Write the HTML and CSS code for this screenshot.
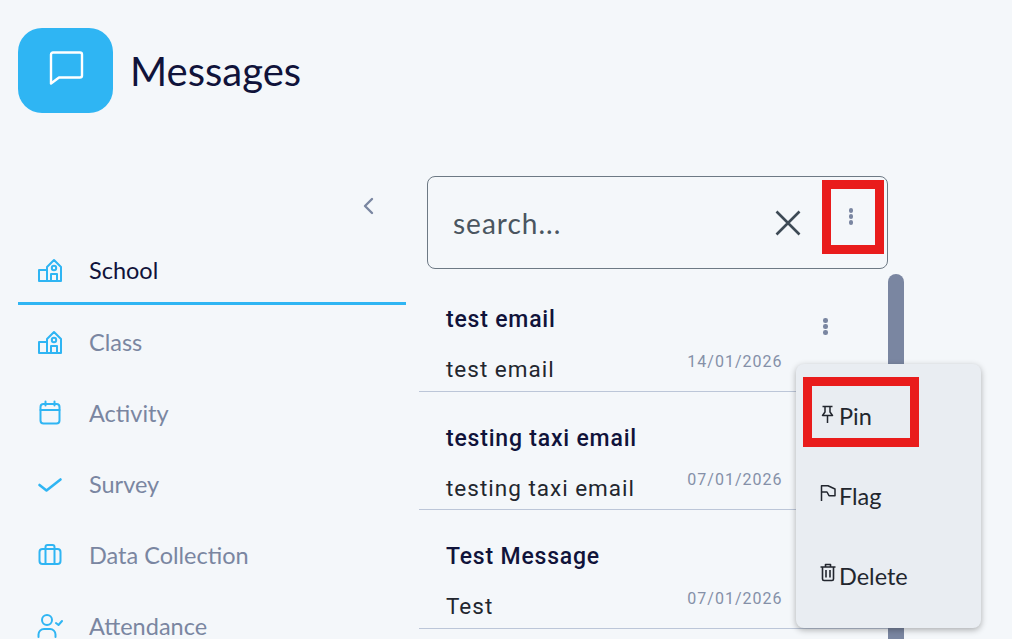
FILE: index.html

```html
<!DOCTYPE html>
<html lang="en">
<head>
    <meta charset="UTF-8">
    <meta name="viewport" content="width=device-width, initial-scale=1.0">
    <title>Messages</title>
    <link rel="stylesheet" href="styles.css">
</head>
<body>
    <div class="page">
        <header class="header">
            <div class="logo">
                <svg width="36" height="36" viewBox="0 0 36 36" fill="none" stroke="#fff" stroke-width="2.400" stroke-linejoin="round"><path d="M3 5.500a2 2 0 0 1 2-2h27a2 2 0 0 1 2 2v21a2 2 0 0 1-2 2H11l-8 6z"/></svg>
            </div>
            <h1>Messages</h1>
        </header>

        <div class="content">
            <nav class="sidebar">
                <div class="collapse">
                    <svg width="14" height="20" viewBox="0 0 14 20" fill="none" stroke="#7a86a1" stroke-width="2.400" stroke-linecap="round" stroke-linejoin="round"><path d="M11 3 4 10l7 7"/></svg>
                </div>
                <a class="tab active">
                    <svg class="tab-icon" viewBox="0 0 26 26" fill="none" stroke="#2fb5f3" stroke-width="2" stroke-linejoin="round"><path d="M2 13h8v11H2zM10 24V10l7-7 7 7v14zM14 24v-7h6v7"/><circle cx="17" cy="11" r="2.200"/></svg>
                    <span>School</span>
                </a>
                <a class="tab">
                    <svg class="tab-icon" viewBox="0 0 26 26" fill="none" stroke="#2fb5f3" stroke-width="2" stroke-linejoin="round"><path d="M2 13h8v11H2zM10 24V10l7-7 7 7v14zM14 24v-7h6v7"/><circle cx="17" cy="11" r="2.200"/></svg>
                    <span>Class</span>
                </a>
                <a class="tab">
                    <svg class="tab-icon" viewBox="0 0 26 26" fill="none" stroke="#2fb5f3" stroke-width="2" stroke-linecap="round" stroke-linejoin="round"><rect x="3.500" y="4" width="19" height="19.500" rx="3"/><path d="M3.500 10h19M8.500 1.500v4M17.500 1.500v4"/></svg>
                    <span>Activity</span>
                </a>
                <a class="tab">
                    <svg class="tab-icon" viewBox="0 0 26 26" fill="none" stroke="#2fb5f3" stroke-width="2.600" stroke-linecap="round" stroke-linejoin="round"><path d="m2.500 14 7 5.500L23.500 8.500"/></svg>
                    <span>Survey</span>
                </a>
                <a class="tab">
                    <svg class="tab-icon" viewBox="0 0 26 26" fill="none" stroke="#2fb5f3" stroke-width="2" stroke-linejoin="round"><rect x="2.500" y="7" width="21" height="15" rx="3"/><path d="M8.500 7v15M17.500 7v15M8.500 7V5a2 2 0 0 1 2-2h5a2 2 0 0 1 2 2v2"/></svg>
                    <span>Data Collection</span>
                </a>
                <a class="tab">
                    <svg class="tab-icon" viewBox="0 0 26 26" fill="none" stroke="#2fb5f3" stroke-width="2" stroke-linecap="round" stroke-linejoin="round"><circle cx="10" cy="7" r="5"/><path d="M1.500 24v-2.500A5.500 5.500 0 0 1 7 16h6a5.500 5.500 0 0 1 5.500 5.500V24M19 10l2.500 2 3.500-4"/></svg>
                    <span>Attendance</span>
                </a>
            </nav>

            <main class="messages">
                <div class="search">
                    <span class="search-text">search...</span>
                    <svg class="search-clear" width="26" height="26" viewBox="0 0 26 26" fill="none" stroke="#3d4a55" stroke-width="2.600"><path d="m1.500 1.500 23 23M24.500 1.500l-23 23"/></svg>
                    <div class="search-more">
                        <span class="dots"><i></i><i></i><i></i></span>
                    </div>
                    <div class="mark mark-search"></div>
                </div>

                <div class="list-wrap">
                    <div class="list">
                        <div class="row">
                            <div class="row-text">
                                <div class="row-title">test email</div>
                                <div class="row-body">test email</div>
                            </div>
                            <div class="row-date">14/01/2026</div>
                            <span class="dots row-dots"><i></i><i></i><i></i></span>
                        </div>
                        <div class="row">
                            <div class="row-text">
                                <div class="row-title">testing taxi email</div>
                                <div class="row-body">testing taxi email</div>
                            </div>
                            <div class="row-date">07/01/2026</div>
                            <span class="dots row-dots"><i></i><i></i><i></i></span>
                        </div>
                        <div class="row">
                            <div class="row-text">
                                <div class="row-title">Test Message</div>
                                <div class="row-body">Test</div>
                            </div>
                            <div class="row-date">07/01/2026</div>
                            <span class="dots row-dots"><i></i><i></i><i></i></span>
                        </div>
                    </div>
                    <div class="scroll-thumb"></div>

                    <div class="menu">
                        <div class="menu-item">
                            <svg width="16" height="22" viewBox="0 0 16 22" fill="none" stroke="#22262e" stroke-width="1.500" stroke-linejoin="round"><path d="M2.500 3.500h10M5 3.500V9l-2.500 3.500h10L10 9V3.500M7.500 12.500V20"/></svg>
                            <span>Pin</span>
                        </div>
                        <div class="menu-item">
                            <svg width="16" height="22" viewBox="0 0 16 22" fill="none" stroke="#22262e" stroke-width="1.500" stroke-linejoin="round"><path d="M1.500 18V2.700H8L15 6v6.700H9L7 9H1.500"/></svg>
                            <span>Flag</span>
                        </div>
                        <div class="menu-item">
                            <svg width="16" height="22" viewBox="0 0 16 22" fill="none" stroke="#22262e" stroke-width="1.600" stroke-linejoin="round"><path d="M.5 4h15M5.500 4V1.500h5V4M2.500 4v12a1.500 1.500 0 0 0 1.500 1.500h8a1.500 1.500 0 0 0 1.500-1.500V4M6 7v7.500M10 7v7.500"/></svg>
                            <span>Delete</span>
                        </div>
                        <div class="mark mark-pin"></div>
                    </div>
                </div>
            </main>
        </div>
    </div>
</body>
</html>
```

FILE: styles.css

```css
html, body { margin: 0; padding: 0; height: 100%; overflow: hidden; }
body { background-color: #f4f7fa; font-family: Lato, "Open Sans", sans-serif; color: #10133a; }
.page { height: 639px; overflow: hidden; }

.header { display: flex; align-items: center; gap: 17px; padding: 28px 18px 0; }
.logo { width: 95px; height: 85px; border-radius: 24px; background-color: #2fb5f3; display: flex; align-items: center; justify-content: center; }
.logo svg { margin-bottom: 7px; }
h1 { margin: 0; font-size: 40px; font-weight: 400; color: #10133a; }

.content { display: flex; margin-top: 63px; }
.sidebar { width: 388px; margin-left: 18px; flex-shrink: 0; }
.collapse { display: flex; justify-content: flex-end; height: 66px; padding-right: 31px; padding-top: 20px; box-sizing: border-box; }
.tab { display: flex; align-items: center; gap: 26px; height: 71px; padding: 2px 0 0 19px; box-sizing: border-box; font-size: 23.500px; color: #7a86a1; }
.tab-icon { width: 26px; height: 26px; flex-shrink: 0; }
.tab.active { height: 63px; padding-bottom: 6px; color: #10133a; border-bottom: 3px solid #2fb5f3; }

.messages { width: 485px; margin-left: 13px; flex-shrink: 0; }
.search { position: relative; display: flex; align-items: center; width: 461px; height: 93px; margin-left: 8px; padding: 0 0 0 25px; box-sizing: border-box; border: 1px solid #6d7984; border-radius: 8px; }
.search-text { flex: 1; font-size: 28px; color: #4a5560; letter-spacing: 1px; }
.search-clear { margin-right: 19px; }
.search-more { width: 62px; margin-right: 5px; display: flex; justify-content: center; padding-bottom: 12px; }
.dots { display: flex; flex-direction: column; gap: 1.500px; align-items: center; }
.dots i { display: block; width: 4.500px; height: 4.500px; border-radius: 50%; background-color: #7a86a1; }

.list-wrap { position: relative; display: flex; margin-top: 5px; }
.list { width: 469px; flex-shrink: 0; }
.row { display: flex; height: 117.500px; margin-bottom: 1px; padding: 34px 0 0 27px; box-sizing: border-box; border-bottom: 1px solid #bcc6d8; }
.row-text { flex: 1; font-family: Roboto, sans-serif; }
.row-title { height: 24px; line-height: 24px; font-size: 23px; font-weight: 500; letter-spacing: 0.800px; color: #10133a; }
.row-body { height: 24px; line-height: 24px; margin-top: 25px; font-size: 22.500px; letter-spacing: 1px; color: #22262e; }
.row-date { align-self: flex-end; margin-bottom: 20px; font-family: Roboto, sans-serif; font-size: 16px; letter-spacing: 1px; color: #8590a8; }
.row-dots { margin: 10px 60.500px 0 40.500px; }
.scroll-thumb { width: 16px; height: 400px; border-radius: 8px 8px 0 0; background-color: #7a86a1; flex-shrink: 0; }

.menu { position: absolute; left: 377px; top: 90px; width: 185px; height: 264px; padding: 13px 0 0 24px; box-sizing: border-box; border-radius: 8px; background-color: #e9edf2; box-shadow: 0 2px 6px rgba(0, 0, 0, 0.3); }
.menu-item { display: flex; align-items: flex-start; height: 80px; padding-top: 25px; box-sizing: border-box; gap: 3px; font-size: 23.500px; color: #22262e; }
.menu-item svg { flex-shrink: 0; margin-top: 1px; }

.mark { position: absolute; border: 9px solid #e91c1c; box-sizing: border-box; }
.mark-search { left: 394px; top: 3px; width: 62px; height: 74px; }
.mark-pin { left: 7px; top: 13px; width: 116px; height: 70px; }
```
